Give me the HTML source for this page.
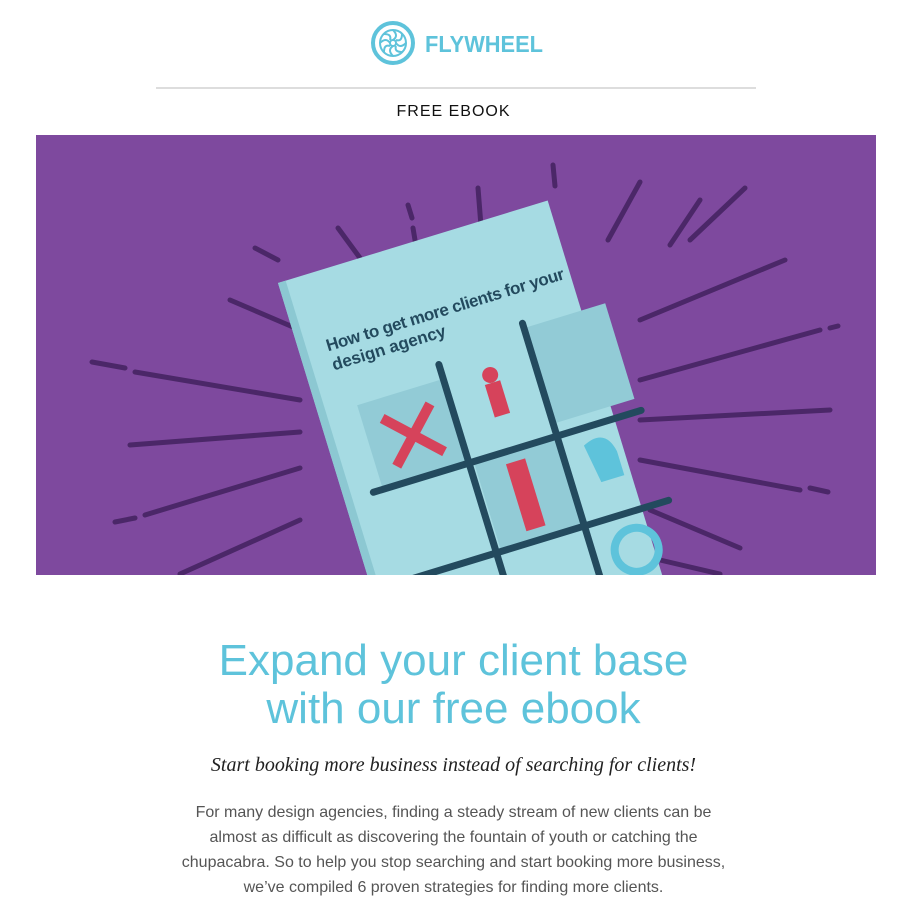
<!DOCTYPE html>
<html><head><meta charset="utf-8"><style>
body{margin:0;background:#fff;width:907px;height:916px;overflow:hidden;font-family:"Liberation Sans",Arial,sans-serif}
.logo{position:absolute;left:369px;top:16px}
.hr{position:absolute;left:156px;top:87px;width:600px;height:2px;background:#ddd}
.fe{position:absolute;top:103px;left:0;width:907px;text-align:center;font-size:16px;letter-spacing:1px;color:#111}
.ban{position:absolute;left:36px;top:135px}
h1{position:absolute;top:637px;left:0;width:907px;text-align:center;margin:0;font-weight:normal;font-size:44px;line-height:48px;color:#5ec3db}
.sub{position:absolute;top:754px;left:0;width:907px;text-align:center;font-family:"Liberation Serif",Georgia,serif;font-style:italic;font-size:20px;color:#222}
.p{position:absolute;top:800px;left:170px;width:567px;text-align:center;font-size:16px;line-height:25px;color:#555}
</style></head><body>
<svg class="logo" width="190" height="54" viewBox="0 0 190 54">
<g fill="none" stroke="#5ec3db">
<circle cx="24" cy="27" r="20" stroke-width="4"/>
<circle cx="24" cy="27" r="13" stroke-width="2"/>
<circle cx="24" cy="27" r="3" stroke-width="2"/>
<path d="M24 14q6 6 0 10M37 27q-6 6-10 0M24 40q-6-6 0-10M11 27q6-6 10 0M33 18q0 8-6 6M33 36q-8 0-6-6M15 36q0-8 6-6M15 18q8 0 6 6" stroke-width="2"/>
</g>
<text x="56" y="36" font-family="Liberation Sans,sans-serif" font-weight="bold" font-size="23" fill="#5ec3db" textLength="118" lengthAdjust="spacingAndGlyphs">FLYWHEEL</text>
</svg>
<div class="hr"></div>
<div class="fe">FREE EBOOK</div>
<svg class="ban" width="840" height="440" viewBox="0 0 840 440">
<rect width="840" height="440" fill="#7e499e"/>
<g stroke="#4b2768" stroke-width="5" stroke-linecap="round" transform="translate(-36,-135)">
<path d="M338 228L360 258M408 205L412 218M413 228L417 252M478 188L481 226M553 165L555 186M640 182L608 240M745 188L690 240M700 200L670 245M255 248L278 260M230 300L300 330M92 362L125 368M135 372L300 400M130 445L300 432M115 522L135 518M145 515L300 468M640 320L785 260M640 380L820 330M830 328L838 326M640 420L830 410M640 460L800 490M810 488L828 492M650 510L740 548M180 574L300 520M660 560L720 574"/>
</g>
<g transform="translate(242,148) rotate(-17)">
<rect x="0" y="0" width="282" height="520" fill="#a6dbe3"/>
<rect x="0" y="0" width="8" height="520" fill="#8cc8d2"/>
<text x="28" y="80" font-size="17" font-weight="bold" font-family="Liberation Sans,sans-serif" fill="#234a5e" textLength="248">How to get more clients for your</text>
<text x="28" y="100" font-size="17" font-weight="bold" font-family="Liberation Sans,sans-serif" fill="#234a5e">design agency</text>
<rect x="40" y="140" width="90" height="85" fill="#92cbd6"/>
<rect x="222" y="115" width="85" height="100" fill="#92cbd6"/>
<rect x="135" y="230" width="90" height="90" fill="#92cbd6"/>
<g stroke="#234a5e" stroke-width="7" stroke-linecap="round">
<path d="M130 125V430M222 110V430M30 228H310M30 322H310"/>
</g>
<path d="M60 160L110 210M110 160L60 210" stroke="#d6435b" stroke-width="10"/>
<circle cx="176" cy="150" r="8" fill="#d6435b"/><rect x="168" y="158" width="16" height="34" fill="#d6435b"/>
<rect x="165" y="240" width="20" height="70" fill="#d6435b"/>
<path d="M245 245q25-12 30 15v25h-24z" fill="#5ec3db"/>
<circle cx="265" cy="360" r="22" fill="none" stroke="#5ec3db" stroke-width="8"/>
<circle cx="80" cy="420" r="8" fill="#5ec3db"/>
</g>
</svg>
<h1>Expand your client base<br>with our free ebook</h1>
<div class="sub">Start booking more business instead of searching for clients!</div>
<div class="p">For many design agencies, finding a steady stream of new clients can be almost as difficult as discovering the fountain of youth or catching the chupacabra. So to help you stop searching and start booking more business, we’ve compiled 6 proven strategies for finding more clients.</div>
</body></html>
